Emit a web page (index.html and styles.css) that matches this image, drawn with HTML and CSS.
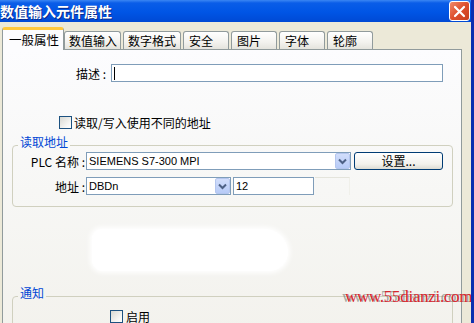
FILE: index.html
```html
<!DOCTYPE html>
<html lang="zh-CN">
<head>
<meta charset="UTF-8">
<title>数值输入元件属性</title>
<link rel="stylesheet" href="styles.css">
</head>
<body>
<div class="window">
    <div class="titlebar">
        <span class="title">数值输入元件属性</span>
        <span class="close">
            <svg width="13" height="13" viewBox="0 0 13 13"><path d="M2 2 L11 11 M11 2 L2 11" stroke="#fff" stroke-width="2.2" stroke-linecap="round"/></svg>
        </span>
    </div>
    <div class="body">
        <div class="tabs">
            <span class="tab active t1">一般属性</span>
            <span class="tab t2">数值输入</span>
            <span class="tab t3">数字格式</span>
            <span class="tab t4">安全</span>
            <span class="tab t4">图片</span>
            <span class="tab t4">字体</span>
            <span class="tab t7">轮廓</span>
        </div>
        <div class="panel">
            <div class="row desc-row">
                <span class="label desc-label">描述 :</span>
                <span class="textbox desc-box"><span class="caret"></span></span>
            </div>
            <div class="row check-row">
                <span class="check"></span>
                <span>读取/写入使用不同的地址</span>
            </div>
            <fieldset class="group read-group">
                <legend>读取地址</legend>
                <div class="row">
                    <span class="label grp-label">PLC 名称 :</span>
                    <span class="combo plc-combo">
                        <span class="combo-text">SIEMENS S7-300 MPI</span>
                        <span class="drop"><svg width="9" height="7" viewBox="0 0 9 7"><path d="M1 1.5 L4.5 5 L8 1.5" fill="none" stroke="#4d6185" stroke-width="2"/></svg></span>
                    </span>
                    <span class="button">设置...</span>
                </div>
                <div class="row addr-row">
                    <span class="label grp-label">地址 :</span>
                    <span class="combo addr-combo">
                        <span class="combo-text">DBDn</span>
                        <span class="drop"><svg width="9" height="7" viewBox="0 0 9 7"><path d="M1 1.5 L4.5 5 L8 1.5" fill="none" stroke="#4d6185" stroke-width="2"/></svg></span>
                    </span>
                    <span class="textbox num-box">12</span>
                    <span class="blank-box"></span>
                </div>
            </fieldset>
            <div class="erased"></div>
            <fieldset class="group notify-group">
                <legend>通知</legend>
                <div class="row enable-row">
                    <span class="check"></span>
                    <span>启用</span>
                </div>
            </fieldset>
        </div>
        <div class="watermark">www.55dianzi.com</div>
    </div>
</div>
</body>
</html>
```

FILE: styles.css
```css
* {
    box-sizing: border-box;
}
body {
    margin: 0;
    width: 474px;
    height: 323px;
    overflow: hidden;
    font-family: "Noto Sans CJK SC", "Liberation Sans", sans-serif;
    font-size: 12px;
    color: #000;
}
.window {
    width: 474px;
    height: 323px;
    overflow: hidden;
    background: #ece9d8;
    border-right: 3px solid #0b2fb0;
    display: flex;
    flex-direction: column;
}
.titlebar {
    height: 22px;
    flex: none;
    display: flex;
    align-items: center;
    justify-content: space-between;
    background: linear-gradient(#3b86f3 0, #0a5de8 3px, #0055e5 55%, #0049d4 100%);
    margin-right: -3px;
}
.title {
    color: #fff;
    font-weight: bold;
    font-size: 14px;
    line-height: 20px;
    text-shadow: 1px 1px 0 #0a2a8a;
}
.close {
    width: 21px;
    height: 20px;
    margin-right: 4px;
    border: 1px solid #fff;
    border-radius: 3px;
    background: linear-gradient(135deg, #f08a6a, #de4f2c 50%, #c8401f);
    display: flex;
    align-items: center;
    justify-content: center;
}
.body {
    flex: 1;
    min-height: 0;
    padding: 6px 0 0 2px;
    position: relative;
}
.tabs {
    display: flex;
    align-items: flex-end;
    height: 21px;
    position: relative;
    z-index: 1;
}
.tab {
    height: 18px;
    margin-right: 2px;
    padding-left: 4px;
    line-height: 17px;
    border: 1px solid #919b9c;
    border-bottom: none;
    border-radius: 3px 3px 0 0;
    background: linear-gradient(#ffffff, #f3f2ee 60%, #e5e4dd);
    white-space: nowrap;
}
.tab.active {
    height: 23px;
    margin-bottom: -1px;
    margin-right: 0;
    padding-left: 6px;
    line-height: 19px;
    background: #fcfcfe;
    border-top: 3px solid #ffc83c;
    font-size: 12.5px;
}
.t1 { width: 62px; }
.t2 { width: 57px; }
.t3 { width: 58px; }
.t4 { width: 46px; padding-left: 5px; }
.t7 { width: 46px; padding-left: 5px; }
.panel {
    width: 460px;
    height: 282px;
    border: 1px solid #919b9c;
    border-bottom: none;
    background: linear-gradient(#fcfcfe, #f7f7f5 50%, #f3f2ed);
    padding: 0 7px 0 0;
    overflow: hidden;
}
.row {
    display: flex;
    align-items: center;
}
.label {
    text-align: right;
    flex: none;
}
.desc-row {
    margin-top: 14px;
    height: 18px;
}
.desc-label {
    width: 103px;
}
.textbox {
    height: 18px;
    border: 1px solid #7f9db9;
    background: #fff;
    font-family: "Liberation Sans", sans-serif;
    font-size: 11px;
    line-height: 16px;
    padding-left: 2px;
}
.desc-box {
    width: 332px;
    margin-left: 5px;
    display: flex;
    align-items: center;
}
.caret {
    width: 1px;
    height: 13px;
    background: #000;
}
.check-row {
    margin-top: 34px;
    height: 13px;
    padding-left: 56px;
    gap: 2px;
}
.check {
    width: 13px;
    height: 13px;
    flex: none;
    border: 1px solid #1c5180;
    background: linear-gradient(135deg, #d8d8d2, #f6f6f4 70%, #fff);
}
.group {
    margin: 0 0 0 9px;
    width: 441px;
    border: 1px solid #d0d0bf;
    border-radius: 4px;
    padding: 0;
    min-width: 0;
}
.group legend {
    color: #0046d5;
    line-height: 14px;
    padding: 0 2px;
    margin-left: 5px;
    position: relative;
    top: -3px;
}
.read-group {
    margin-top: 9px;
    padding-bottom: 11px;
}
.grp-label {
    width: 72px;
}
.combo {
    height: 18px;
    margin-left: 1px;
    border: 1px solid #7f9db9;
    background: #fff;
    display: flex;
    align-items: center;
    font-family: "Liberation Sans", sans-serif;
    font-size: 11px;
}
.combo-text {
    flex: 1;
    padding-left: 2px;
}
.drop {
    width: 15px;
    height: 16px;
    border-radius: 2px;
    background: linear-gradient(#d2defb, #b7cbf7);
    border: 1px solid #b4c6ee;
    display: flex;
    align-items: center;
    justify-content: center;
}
.plc-combo {
    width: 265px;
}
.button {
    width: 89px;
    height: 18px;
    margin-left: 3px;
    border: 1px solid #003c74;
    border-radius: 3px;
    background: linear-gradient(#ffffff, #f2f1ec 70%, #dcdbd3);
    text-align: center;
    line-height: 16px;
}
.addr-row {
    margin-top: 7px;
}
.addr-combo {
    width: 145px;
}
.num-box {
    width: 81px;
    margin-left: 2px;
}
.blank-box {
    width: 35px;
    height: 18px;
    margin-left: 1px;
    border-top: 1px solid #e4e4dc;
    border-right: 1px solid #f0f0ea;
}
.erased {
    margin: 22px 0 0 89px;
    width: 196px;
    height: 42px;
    background: #fff;
    border-radius: 12px 30px 24px 14px;
    box-shadow: 0 0 5px 2px #fff;
}
.notify-group {
    margin-top: 18px;
    height: 60px;
}
.enable-row {
    margin-top: 5px;
    padding-left: 97px;
    gap: 3px;
}
.watermark {
    position: absolute;
    left: 345px;
    top: 265px;
    font-family: "Liberation Serif", serif;
    font-size: 17px;
    color: #d8262e;
    text-shadow: -3px 0 0 rgba(110, 110, 110, 0.6);
    letter-spacing: -0.3px;
}
```
